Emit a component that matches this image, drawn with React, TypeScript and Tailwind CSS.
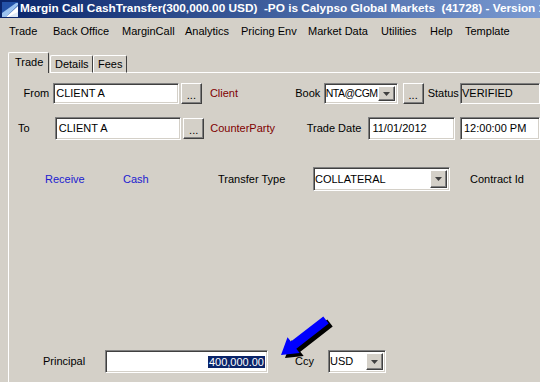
import React from 'react';

const sunken =
  'bg-white border border-[#808080] border-b-white border-r-white shadow-[inset_1px_1px_0_#404040,inset_-1px_-1px_0_#d4d0c8]';
const raised =
  'bg-[#d4d0c8] border border-t-white border-l-white border-r-[#404040] border-b-[#404040] shadow-[inset_-1px_-1px_0_#808080]';

function DotsButton() {
  return (
    <div className={`${raised} w-[21px] h-full flex items-end justify-center pb-[2px] leading-none`}>...</div>
  );
}

function Combo({ value, className, tight }: { value: string; className: string; tight?: boolean }) {
  return (
    <div className={`${sunken} ${className} flex items-center`}>
      <span className={`flex-1 pl-[1px] overflow-hidden ${tight ? 'text-[10.5px] tracking-[-0.5px]' : ''}`}>{value}</span>
      <div className={`${raised} w-[17px] h-[calc(100%-4px)] mr-[2px] flex items-center justify-center shrink-0`}>
        <svg width="7" height="4" viewBox="0 0 7 4">
          <polygon points="0,0 7,0 3.5,4" fill="#404040" />
        </svg>
      </div>
    </div>
  );
}

const MENU: [string, string][] = [
  ['Trade', 'w-[44px]'],
  ['Back Office', 'w-[69px]'],
  ['MarginCall', 'w-[63px]'],
  ['Analytics', 'w-[56px]'],
  ['Pricing Env', 'w-[67px]'],
  ['Market Data', 'w-[73px]'],
  ['Utilities', 'w-[49px]'],
  ['Help', 'w-[35px]'],
  ['Template', 'w-[60px]'],
];

export default function App() {
  return (
    <div
      className="relative w-[540px] h-[382px] overflow-hidden bg-[#d4d0c8] text-[11px] text-black flex flex-col"
      style={{ fontFamily: '"Liberation Sans", Arial, sans-serif' }}
    >
      {/* Title bar */}
      <div className="h-[18px] shrink-0 flex items-center bg-gradient-to-r from-[#0a246a] to-[#7b9bd2] text-white font-bold whitespace-nowrap overflow-hidden">
        <svg width="16" height="15" viewBox="0 0 16 15" className="ml-[2px] mr-[2px] shrink-0">
          <rect x="0" y="0" width="16" height="15" fill="#2452a8" />
          <polygon points="0,15 0,11 14,1 16,1 16,3 4,15" fill="#9cc3f0" />
          <path d="M4,15 L16,4 L16,15 Z" fill="#ffffff" />
          <path d="M6,15 Q11,12 16,10 L16,15 Z" fill="#dfe9f7" />
        </svg>
        <span className="text-[11.8px]">Margin Call CashTransfer(300,000.00 USD)&nbsp; -PO is Calypso Global Markets&nbsp; (41728) - Version 13</span>
      </div>

      {/* Menu bar */}
      <div className="h-[27px] shrink-0 flex items-center pl-[9px] whitespace-nowrap">
        {MENU.map(([label, w]) => (
          <span key={label} className={`${w} shrink-0`}>{label}</span>
        ))}
      </div>

      {/* Tabs */}
      <div className="h-[28px] shrink-0 flex items-end pl-[8px]">
        <div className="w-[41px] h-[21px] border-t border-l border-white border-r border-r-[#404040] rounded-t-[2px] flex items-center pl-[6px] pb-[2px]">
          Trade
        </div>
        <div className="w-[43px] h-[18px] border-t border-l border-white border-r border-r-[#404040] rounded-t-[2px] flex items-center pl-[4px] ml-[1px] border-b border-b-white">
          Details
        </div>
        <div className="w-[34px] h-[18px] border-t border-l border-white border-r border-r-[#404040] rounded-t-[2px] flex items-center pl-[4px] border-b border-b-white">
          Fees
        </div>
        <div className="flex-1 border-b border-white" />
      </div>

      {/* Panel */}
      <div className="flex-1 ml-[8px] border-l border-white flex flex-col">
        {/* Row 1 */}
        <div className="mt-[10px] h-[21px] flex items-center whitespace-nowrap">
          <span className="w-[45px] text-right pr-[4px]">From</span>
          <div className={`${sunken} w-[128px] h-full flex items-center pl-[2px]`}>CLIENT A</div>
          <div className="ml-[2px] h-full"><DotsButton /></div>
          <span className="ml-[8px] w-[87px] text-[#800000]">Client</span>
          <span className="w-[29px]">Book</span>
          <Combo value="NTA@CGM" className="w-[74px] h-full" tight />
          <div className="ml-[5px] h-full"><DotsButton /></div>
          <span className="ml-[4px] w-[33px]">Status</span>
          <div className="w-[80px] h-full border border-[#808080] border-b-white border-r-white shadow-[inset_1px_1px_0_#404040] flex items-center pl-[1px] shrink-0">VERIFIED</div>
        </div>

        {/* Row 2 */}
        <div className="mt-[13px] h-[23px] flex items-center whitespace-nowrap">
          <span className="w-[46px] pl-[9px]">To</span>
          <div className={`${sunken} w-[127px] h-full flex items-center pl-[3px]`}>CLIENT A</div>
          <div className="ml-[2px] h-[21px]"><DotsButton /></div>
          <span className="ml-[6px] w-[97px] text-[#800000]">CounterParty</span>
          <span className="w-[62px]">Trade Date</span>
          <div className={`${sunken} w-[87px] h-full flex items-center pl-[3px]`}>11/01/2012</div>
          <div className={`${sunken} ml-[5px] w-[80px] h-full flex items-center pl-[3px] shrink-0`}>12:00:00 PM</div>
        </div>

        {/* Row 3 */}
        <div className="mt-[27px] h-[24px] flex items-center whitespace-nowrap">
          <span className="ml-[36px] w-[78px] text-[#2020d0]">Receive</span>
          <span className="w-[95px] text-[#2020d0]">Cash</span>
          <span className="w-[95px]">Transfer Type</span>
          <Combo value="COLLATERAL" className="w-[137px] h-full" />
          <span className="ml-[20px]">Contract Id</span>
        </div>

        {/* Row 4 */}
        <div className="mt-[159px] h-[23px] flex items-center whitespace-nowrap">
          <span className="ml-[34px] w-[62px]">Principal</span>
          <div className={`${sunken} w-[163px] h-full flex items-center justify-end pr-[2px]`}>
            <span className="bg-[#0a246a] text-white leading-[12px] px-[1px]">400,000.00</span>
          </div>
          <span className="ml-[27px] w-[33px]">Ccy</span>
          <Combo value="USD" className="w-[58px] h-full" />
        </div>
      </div>

      {/* Annotation arrow */}
      <svg
        className="absolute left-[270px] top-[305px]"
        width="70"
        height="60"
        viewBox="0 0 70 60"
      >
        <polygon
          points="15,53 21.5,35.3 24.9,39.6 57.3,14.4 62.7,21.6 30.3,46.8 33.7,51.1"
          fill="#000000"
        />
        <polygon
          points="11,50 17.5,32.3 20.9,36.6 53.3,11.4 58.7,18.6 26.3,43.8 29.7,48.1"
          fill="#0000ff"
        />
      </svg>
    </div>
  );
}
